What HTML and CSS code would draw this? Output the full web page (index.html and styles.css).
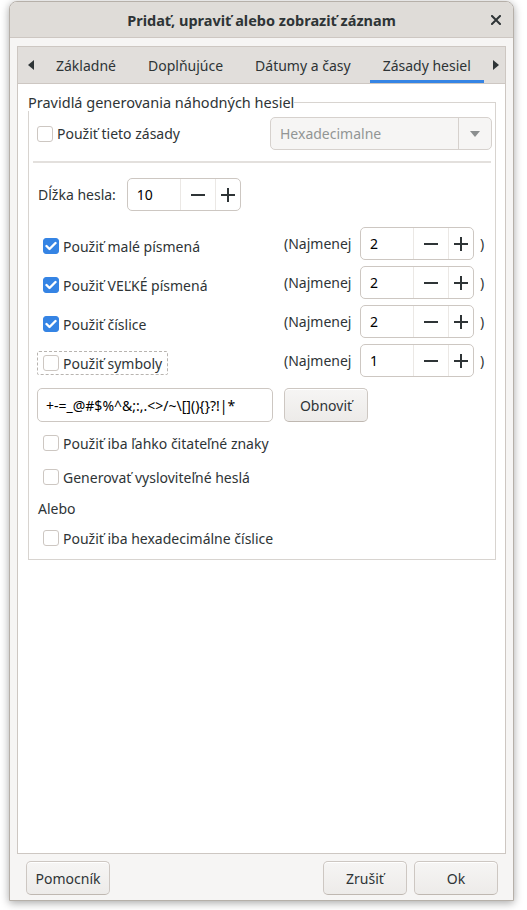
FILE: index.html
```html
<!DOCTYPE html>
<html lang="sk">
<head>
<meta charset="utf-8">
<title>Pridať, upraviť alebo zobraziť záznam</title>
<link rel="stylesheet" href="styles.css">
</head>
<body>
<div class="window">
  <header class="titlebar">
    <span class="title">Pridať, upraviť alebo zobraziť záznam</span>
    <span class="close"><svg width="10" height="10" viewBox="0 0 10 10"><path d="M1 1L9 9M9 1L1 9" stroke="#2e3436" stroke-width="2" stroke-linecap="square"/></svg></span>
  </header>
  <div class="body">
    <div class="notebook">
      <nav class="tabs">
        <span class="arrow"><svg width="6" height="10" viewBox="0 0 6 10"><path d="M6 0L0 5L6 10Z" fill="#2e3436"/></svg></span>
        <span class="tab">Základné</span>
        <span class="tab">Doplňujúce</span>
        <span class="tab">Dátumy a časy</span>
        <span class="tab active">Zásady hesiel</span>
        <span class="arrow"><svg width="6" height="10" viewBox="0 0 6 10"><path d="M0 0L6 5L0 10Z" fill="#2e3436"/></svg></span>
      </nav>
      <div class="page">
        <fieldset class="frame">
          <legend class="frame-label">Pravidlá generovania náhodných hesiel</legend>
          <div class="row row-policy">
            <label class="check plain"><span class="box"></span><span>Použiť tieto zásady</span></label>
            <div class="combo">
              <span class="combo-text">Hexadecimalne</span>
              <span class="combo-btn"><svg width="10" height="6" viewBox="0 0 10 6"><path d="M0 0H10L5 6Z" fill="#8b8e8f"/></svg></span>
            </div>
          </div>
          <div class="sep"></div>
          <div class="row row-length">
            <span class="len-label">Dĺžka hesla:</span>
            <div class="spin">
              <span class="spin-val">10</span>
              <span class="spin-btn minus"><svg width="14" height="14" viewBox="0 0 14 14"><path d="M0 7H14" stroke="#2e3436" stroke-width="2"/></svg></span>
              <span class="spin-btn plus"><svg width="14" height="14" viewBox="0 0 14 14"><path d="M0 7H14M7 0V14" stroke="#2e3436" stroke-width="2"/></svg></span>
            </div>
          </div>
          <div class="row row-class first">
            <div class="check-cell"><label class="check"><span class="box on"><svg width="12" height="10" viewBox="0 0 12 10"><path d="M1.5 5L4.5 8L10.5 2" fill="none" stroke="#fff" stroke-width="2.4" stroke-linecap="round" stroke-linejoin="round"/></svg></span><span>Použiť malé písmená</span></label></div>
            <span class="least">(Najmenej</span>
            <div class="spin">
              <span class="spin-val">2</span>
              <span class="spin-btn minus"><svg width="14" height="14" viewBox="0 0 14 14"><path d="M0 7H14" stroke="#2e3436" stroke-width="2"/></svg></span>
              <span class="spin-btn plus"><svg width="14" height="14" viewBox="0 0 14 14"><path d="M0 7H14M7 0V14" stroke="#2e3436" stroke-width="2"/></svg></span>
            </div>
            <span class="paren">)</span>
          </div>
          <div class="row row-class">
            <div class="check-cell"><label class="check"><span class="box on"><svg width="12" height="10" viewBox="0 0 12 10"><path d="M1.5 5L4.5 8L10.5 2" fill="none" stroke="#fff" stroke-width="2.4" stroke-linecap="round" stroke-linejoin="round"/></svg></span><span>Použiť VEĽKÉ písmená</span></label></div>
            <span class="least">(Najmenej</span>
            <div class="spin">
              <span class="spin-val">2</span>
              <span class="spin-btn minus"><svg width="14" height="14" viewBox="0 0 14 14"><path d="M0 7H14" stroke="#2e3436" stroke-width="2"/></svg></span>
              <span class="spin-btn plus"><svg width="14" height="14" viewBox="0 0 14 14"><path d="M0 7H14M7 0V14" stroke="#2e3436" stroke-width="2"/></svg></span>
            </div>
            <span class="paren">)</span>
          </div>
          <div class="row row-class">
            <div class="check-cell"><label class="check"><span class="box on"><svg width="12" height="10" viewBox="0 0 12 10"><path d="M1.5 5L4.5 8L10.5 2" fill="none" stroke="#fff" stroke-width="2.4" stroke-linecap="round" stroke-linejoin="round"/></svg></span><span>Použiť číslice</span></label></div>
            <span class="least">(Najmenej</span>
            <div class="spin">
              <span class="spin-val">2</span>
              <span class="spin-btn minus"><svg width="14" height="14" viewBox="0 0 14 14"><path d="M0 7H14" stroke="#2e3436" stroke-width="2"/></svg></span>
              <span class="spin-btn plus"><svg width="14" height="14" viewBox="0 0 14 14"><path d="M0 7H14M7 0V14" stroke="#2e3436" stroke-width="2"/></svg></span>
            </div>
            <span class="paren">)</span>
          </div>
          <div class="row row-class">
            <div class="check-cell"><label class="check focused"><span class="box"></span><span>Použiť symboly</span></label></div>
            <span class="least">(Najmenej</span>
            <div class="spin">
              <span class="spin-val">1</span>
              <span class="spin-btn minus"><svg width="14" height="14" viewBox="0 0 14 14"><path d="M0 7H14" stroke="#2e3436" stroke-width="2"/></svg></span>
              <span class="spin-btn plus"><svg width="14" height="14" viewBox="0 0 14 14"><path d="M0 7H14M7 0V14" stroke="#2e3436" stroke-width="2"/></svg></span>
            </div>
            <span class="paren">)</span>
          </div>
          <div class="row row-symbols">
            <span class="entry">+-=_@#$%^&amp;;:,.&lt;&gt;/~\[](){}?!|*</span>
            <span class="button">Obnoviť</span>
          </div>
          <div class="row row-opt opt1">
            <label class="check"><span class="box"></span><span>Použiť iba ľahko čitateľné znaky</span></label>
          </div>
          <div class="row row-opt opt2">
            <label class="check"><span class="box"></span><span>Generovať vysloviteľné heslá</span></label>
          </div>
          <div class="row row-or">Alebo</div>
          <div class="row row-opt opt3">
            <label class="check"><span class="box"></span><span>Použiť iba hexadecimálne číslice</span></label>
          </div>
        </fieldset>
      </div>
    </div>
    <footer class="actions">
      <span class="button wide">Pomocník</span>
      <span class="spacer"></span>
      <span class="button wide">Zrušiť</span>
      <span class="button wide">Ok</span>
    </footer>
  </div>
</div>
</body>
</html>
```
FILE: styles.css
```css
* { box-sizing: border-box; }
html, body { margin: 0; padding: 0; }
body {
  background: #ffffff;
  font-family: "Noto Sans", "DejaVu Sans", sans-serif;
  font-size: 14px;
  color: #2e3436;
  width: 527px;
  height: 910px;
  overflow: hidden;
}
.window {
  margin: 1px 0 0 9px;
  width: 505px;
  height: 900px;
  border: 1px solid #b6b0a9;
  border-radius: 8px 8px 0 0;
  box-shadow: 0 2px 9px rgba(0,0,0,0.35);
  background: #f6f5f4;
  display: flex;
  flex-direction: column;
  overflow: hidden;
}
.titlebar {
  height: 36px;
  flex: none;
  background: #dfdcd8;
  border-bottom: 1px solid #cdc7c2;
  display: flex;
  align-items: center;
  justify-content: center;
  position: relative;
}
.title {
  font-weight: bold;
  font-size: 14.5px;
  color: #2e3436;
}
.close {
  position: absolute;
  right: 12px;
  top: 13px;
  display: flex;
}
.body {
  flex: 1;
  display: flex;
  flex-direction: column;
  padding: 8px 7px 6px 7px;
}
.notebook {
  height: 808px;
  border: 1px solid #cdc7c2;
  background: #ffffff;
  display: flex;
  flex-direction: column;
}
.tabs {
  height: 37px;
  flex: none;
  background: #e1dedb;
  border-bottom: 1px solid #cdc7c2;
  display: flex;
  align-items: stretch;
  padding: 0 6px 0 10px;
  white-space: nowrap;
}
.arrow {
  display: flex;
  align-items: center;
  width: 12px;
  flex: none;
}
.tab {
  display: flex;
  align-items: center;
  padding: 0 13px;
  margin: 0 3px;
  color: #2e3436;
  font-size: 14px;
  white-space: nowrap;
  flex: none;
}
.tab:first-of-type { margin-left: 2px; }
.tab.active {
  box-shadow: inset 0 -3px 0 #3584e4;
}
.tabs .arrow:last-child { margin-left: auto; justify-content: flex-end; }
.page {
  flex: 1;
  padding: 10px 9px 0 10px;
}
.frame {
  margin: 0;
  padding: 0 0 9px 0;
  border: 1px solid #d8d4d0;
  min-width: 0;
}
.frame-label {
  padding: 0;
  margin-left: -1px;
  font-size: 14.5px;
  line-height: 17px;
}
.row {
  display: flex;
  align-items: center;
}
.check {
  display: flex;
  align-items: center;
  gap: 4px;
  padding: 0 5px;
  height: 24px;
  border: 1px solid transparent;
  white-space: nowrap;
}
.check.plain { padding: 0; }
.check.focused { border: 1px dashed #b8b4b0; border-radius: 2px; }
.box {
  width: 16px;
  height: 16px;
  flex: none;
  border: 1px solid #cdc7c2;
  border-radius: 3px;
  background: #ffffff;
  display: flex;
  align-items: center;
  justify-content: center;
}
.box.on {
  background: #3584e4;
  border-color: #3584e4;
}
.row-policy {
  margin-top: 6px;
  height: 33px;
  padding: 0 3px 0 7px;
  justify-content: space-between;
}
.combo {
  width: 222px;
  height: 33px;
  border: 1px solid #d6d1cd;
  border-radius: 5px;
  background: #f6f5f4;
  display: flex;
  align-items: stretch;
}
.combo-text {
  flex: 1;
  display: flex;
  align-items: center;
  padding-left: 9px;
  color: #929595;
}
.combo-btn {
  width: 33px;
  border-left: 1px solid #d6d1cd;
  display: flex;
  align-items: center;
  justify-content: center;
}
.sep {
  height: 2px;
  margin: 11px 4px 0 4px;
  background: #e3e0dd;
}
.row-length {
  margin-top: 15px;
  padding-left: 9px;
  gap: 11px;
}
.spin {
  width: 114px;
  height: 33px;
  border: 1px solid #cdc7c2;
  border-radius: 5px;
  background: #ffffff;
  display: flex;
  align-items: stretch;
  flex: none;
}
.spin-val {
  width: 52px;
  display: flex;
  align-items: center;
  padding-left: 9px;
  color: #000000;
}
.spin-btn {
  display: flex;
  align-items: center;
  justify-content: center;
  border-left: 1px solid #ebe8e5;
}
.spin-btn.minus { width: 35px; }
.spin-btn.plus { flex: 1; }
.row-class {
  margin-top: 6px;
  height: 33px;
  padding-left: 8px;
}
.row-class.first { margin-top: 16px; }
.check-cell { width: 247px; flex: none; display: flex; margin-top: 5px; }
.least { width: 76px; }
.paren { margin-left: 6px; }
.row-symbols {
  margin-top: 11px;
  padding-left: 8px;
  gap: 11px;
}
.entry {
  width: 236px;
  height: 34px;
  border: 1px solid #cdc7c2;
  border-radius: 5px;
  background: #ffffff;
  display: flex;
  align-items: center;
  padding-left: 8px;
  color: #000000;
  font-size: 14px;
  white-space: nowrap;
}
.button {
  height: 34px;
  padding: 0 18px;
  border: 1px solid #cdc7c2;
  border-bottom-color: #bfb8b1;
  border-radius: 5px;
  background: linear-gradient(#f6f5f4, #edebe9);
  display: flex;
  align-items: center;
  justify-content: center;
  box-shadow: inset 0 1px #ffffff;
  color: #2e3436;
}
.row-symbols .button { width: 84px; }
.row-opt { padding-left: 8px; height: 24px; }
.opt1 { margin-top: 9px; }
.opt2 { margin-top: 10px; }
.row-or { margin-top: 7px; height: 24px; padding-left: 9px; }
.opt3 { margin-top: 6px; }
.actions {
  display: flex;
  align-items: center;
  padding: 7px 8px 0 9px;
  gap: 7px;
}
.actions .spacer { flex: 1; }
.button.wide { width: 84px; height: 34px; }
```
